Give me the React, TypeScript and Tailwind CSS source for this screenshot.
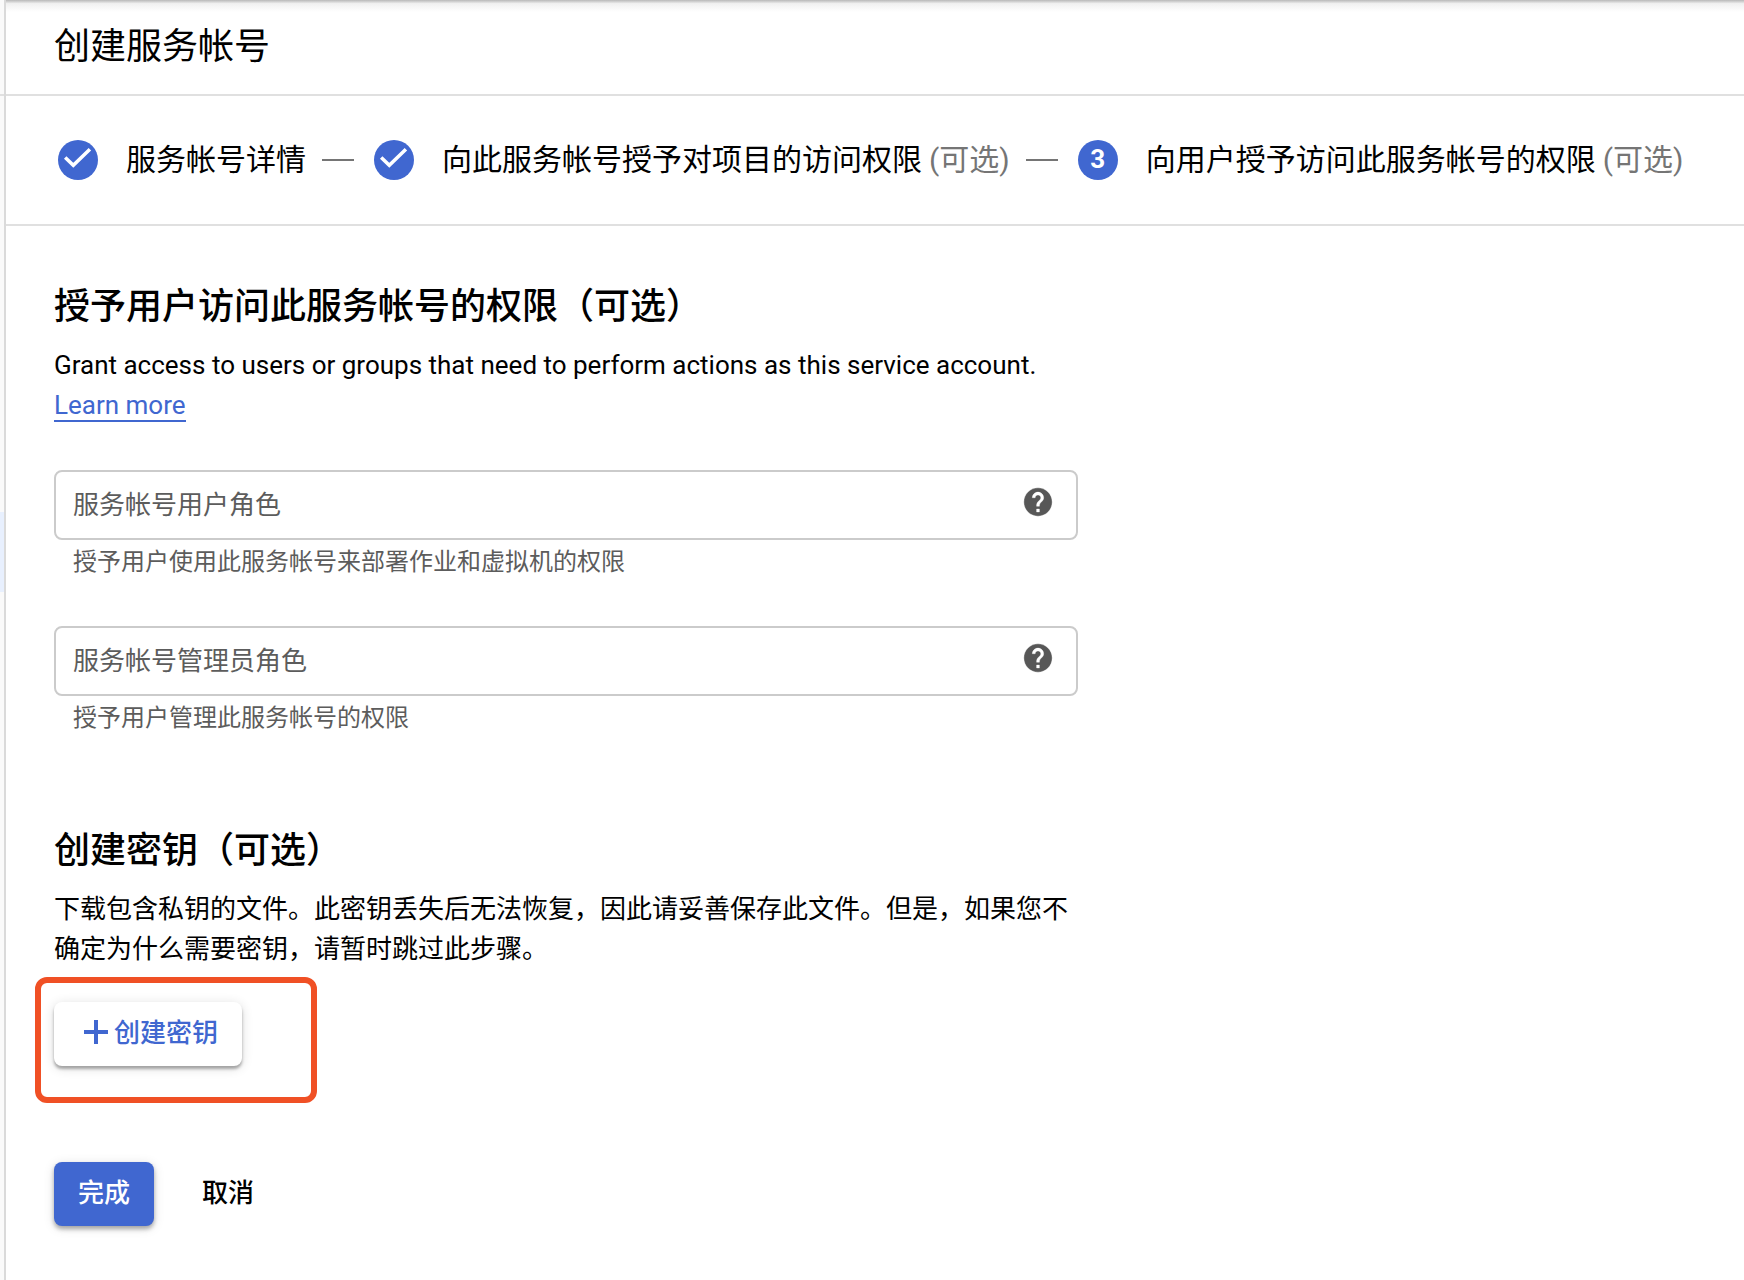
import type { ReactNode } from "react";

function CheckBadge() {
  return (
    <span className="flex size-10 shrink-0 items-center justify-center rounded-full bg-[#4067d0]">
      <svg viewBox="0 0 40 40" className="size-10" fill="none" stroke="white" strokeWidth="3.5" aria-hidden="true">
        <path d="M7.2 17.4 L15.3 25.3 L31.9 9.2" />
      </svg>
    </span>
  );
}

function HelpIcon() {
  return (
    <svg viewBox="0 0 24 24" className="size-[34px]" fill="#575757" aria-hidden="true">
      <path d="M12 2C6.48 2 2 6.48 2 12s4.48 10 10 10 10-4.48 10-10S17.52 2 12 2zm1 17h-2v-2h2v2zm2.07-7.75l-.9.92C13.45 12.9 13 13.5 13 15h-2v-.5c0-1.1.45-2.1 1.17-2.83l1.24-1.26c.37-.36.59-.86.59-1.41 0-1.1-.9-2-2-2s-2 .9-2 2H8c0-2.21 1.79-4 4-4s4 1.79 4 4c0 .88-.36 1.68-.93 2.25z" stroke="white" strokeWidth="0.25" />
    </svg>
  );
}

function Step({ badge, title, optional }: { badge: ReactNode; title: string; optional?: boolean }) {
  return (
    <li className="flex items-center gap-7 whitespace-nowrap">
      {badge}
      <span className="flex gap-[7px]">
        {title}
        {optional && <span className="text-[#757575]">(可选)</span>}
      </span>
    </li>
  );
}

function StepLine() {
  return <li aria-hidden="true" className="mr-5 ml-4 h-0.5 w-8 shrink-0 bg-[#757575]" />;
}

function RoleField({ id, label, hint }: { id: string; label: string; hint: string }) {
  return (
    <div>
      <div className="flex h-[70px] items-center rounded-lg border-2 border-[#cbcbcb] pr-[21px] pl-[17px]">
        <input
          id={id}
          type="text"
          aria-label={label}
          aria-describedby={`${id}-hint`}
          placeholder={label}
          className="min-w-0 flex-1 bg-transparent text-[26px] leading-10 outline-none placeholder:text-[#5c5c5c] placeholder:opacity-100"
        />
        <button type="button" aria-label="帮助" className="mb-1.5">
          <HelpIcon />
        </button>
      </div>
      <p id={`${id}-hint`} className="mt-1 pl-[19px] text-2xl leading-9 text-[#5c5c5c]">
        {hint}
      </p>
    </div>
  );
}

export default function App() {
  return (
    <div className="flex min-h-screen bg-white font-['Roboto','Noto_Sans_CJK_SC',sans-serif] text-black">
      <aside className="flex w-1 shrink-0 flex-col bg-[#fafafa]">
        <div className="h-24 border-b-2 border-[#e0e0e0]" />
        <div className="mt-[416px] h-20 bg-[#e8f0fe]" />
      </aside>

      <main className="relative min-w-0 flex-1 border-l-2 border-[#dadada]">
        <div className="pointer-events-none absolute inset-x-0 top-0 h-3 bg-linear-to-b from-[#b8b8b8] via-[#f0f0f0] via-30% to-white" />
        <header className="relative flex h-24 items-center border-b-2 border-[#e0e0e0] px-12">
          <h1 className="text-4xl leading-[52px]">创建服务帐号</h1>
        </header>

        <ol className="flex h-[130px] items-center border-b-2 border-[#e0e0e0] pl-[52px] text-3xl leading-10">
          <Step badge={<CheckBadge />} title="服务帐号详情" />
          <StepLine />
          <Step badge={<CheckBadge />} title="向此服务帐号授予对项目的访问权限" optional />
          <StepLine />
          <Step
            badge={
              <span className="flex size-10 shrink-0 items-center justify-center rounded-full bg-[#4067d0] pb-0.5 text-[26px] font-bold text-white">
                3
              </span>
            }
            title="向用户授予访问此服务帐号的权限"
            optional
          />
        </ol>

        <div className="max-w-[1120px] px-12 pt-[55px] pb-12 text-[26px] leading-10">
          <section>
            <h2 className="text-4xl leading-[52px] font-medium">授予用户访问此服务帐号的权限（可选）</h2>
            <p className="mt-3">
              Grant access to users or groups that need to perform actions as this service account.
              <br />
              <a href="#learn-more" className="border-b-2 border-[#4067d0] text-[#4067d0]">
                Learn more
              </a>
            </p>
            <div className="mt-[45px] flex flex-col gap-[46px]">
              <RoleField id="user-role" label="服务帐号用户角色" hint="授予用户使用此服务帐号来部署作业和虚拟机的权限" />
              <RoleField id="admin-role" label="服务帐号管理员角色" hint="授予用户管理此服务帐号的权限" />
            </div>
          </section>

          <section className="mt-[89px]">
            <h2 className="text-4xl leading-[52px] font-medium">创建密钥（可选）</h2>
            <p className="mt-3">
              下载包含私钥的文件。此密钥丢失后无法恢复，因此请妥善保存此文件。但是，如果您不确定为什么需要密钥，请暂时跳过此步骤。
            </p>
            <div className="mt-2 -ml-[19px] w-[282px] rounded-xl border-6 border-[#f05025] px-[13px] pt-[19px] pb-[31px]">
              <button
                type="button"
                className="flex h-16 items-center gap-1.5 rounded-lg bg-white pr-6 pb-0.5 pl-[30px] font-medium text-[#4067d0] shadow-[0_3px_3px_rgba(0,0,0,0.3),0_2px_12px_rgba(0,0,0,0.14)]"
              >
                <svg viewBox="0 0 24 24" className="mb-0.5 size-6" fill="#4067d0" aria-hidden="true">
                  <path d="M10 0h4v10h10v4H14v10h-4V14H0v-4h10z" />
                </svg>
                创建密钥
              </button>
            </div>
          </section>

          <div className="mt-[59px] flex gap-6">
            <button
              type="button"
              className="h-16 rounded-lg bg-[#4067d0] px-6 pb-0.5 font-medium text-white shadow-[0_3px_4px_rgba(0,0,0,0.3),0_2px_12px_rgba(0,0,0,0.12)]"
            >
              完成
            </button>
            <button type="button" className="h-16 rounded-lg px-6 pb-0.5 font-medium">
              取消
            </button>
          </div>
        </div>
      </main>
    </div>
  );
}
